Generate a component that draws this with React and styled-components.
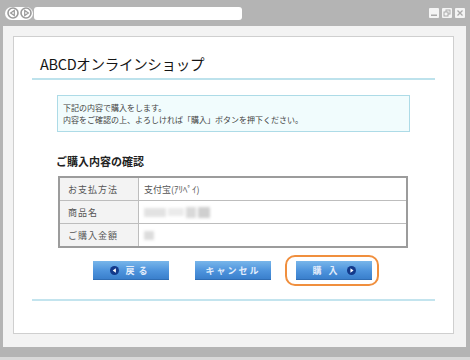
import styled, { createGlobalStyle } from "styled-components"

const Global = createGlobalStyle`
  html, body { margin: 0; padding: 0; background: #d9d9d9; }
  body { font-family: "Noto Sans CJK JP", "Noto Sans", sans-serif; }
`

const Frame = styled.div`
  width: 470px;
  height: 357px;
  background: #b4b4b4;
  display: flex;
  flex-direction: column;
`

const TitleBar = styled.div`
  height: 26px;
  display: flex;
  align-items: center;
  padding: 0 5px;
  box-sizing: border-box;
`

const NavPill = styled.div`
  width: 28px;
  height: 13px;
  background: #fff;
  border-radius: 7px;
  display: flex;
  align-items: center;
  justify-content: center;
  gap: 1px;
`

const Address = styled.div`
  width: 208px;
  height: 13px;
  margin-left: 1px;
  background: #fff;
  border-radius: 3px;
`

const WinButtons = styled.div`
  margin-left: auto;
  display: flex;
  gap: 3px;
`

const WinBtn = styled.div`
  width: 10px;
  height: 10px;
  background: #f4f4f4;
  border-radius: 1px;
  display: flex;
  align-items: center;
  justify-content: center;
`

const WindowBody = styled.div`
  margin: 0 4px 0 3px;
  height: 321px;
  background: #f3f3f3;
  padding: 10px 12px 13px 10px;
  box-sizing: border-box;
`

const Panel = styled.div`
  height: 100%;
  background: #fff;
  border: 1px solid #cfcfcf;
  box-sizing: border-box;
  padding: 0 18px;
`

const Header = styled.h1`
  margin: 0;
  padding: 17px 0 4px 8px;
  font-size: 14.5px;
  line-height: 20px;
  font-weight: 400;
  color: #151515;
  letter-spacing: -0.3px;
  border-bottom: 2px solid #bde2ec;
`

const Notice = styled.div`
  margin: 15px 25px 0 25px;
  padding: 6px 5px 5px;
  background: #f1fcfd;
  border: 1px solid #addbe7;
  font-size: 8px;
  line-height: 12px;
  color: #444;
`

const Section = styled.div`
  margin: 0 26px 0 26px;
`

const SectionTitle = styled.h2`
  margin: 22px 0 8px -2px;
  font-size: 11px;
  line-height: 14px;
  font-weight: 700;
  color: #222;
`

const Table = styled.table`
  width: 350px;
  border-collapse: collapse;
  border: 2px solid #9c9c9c;
  font-size: 9px;
  color: #555;
`

const Th = styled.th`
  width: 70px;
  height: 22px;
  padding: 0 0 0 8px;
  text-align: left;
  font-weight: 400;
  letter-spacing: 1px;
  background: #f3f3f3;
  border: 1px solid #bdbdbd;
`

const Td = styled.td`
  padding: 0 0 0 5px;
  border: 1px solid #bdbdbd;
`

const Blur = styled.div`
  display: flex;
  align-items: center;
  gap: 2px;
  filter: blur(1.6px);
`

const Patch = styled.span`
  display: block;
  width: ${p => p.w}px;
  height: ${p => p.h}px;
  background: ${p => p.c};
`

const Buttons = styled.div`
  display: flex;
  align-items: center;
  margin: 6px 0 0 61px;
  height: 33px;
`

const Button = styled.div`
  width: 76px;
  height: 19px;
  display: flex;
  align-items: center;
  justify-content: center;
  gap: ${p => p.iconGap || 6}px;
  background: linear-gradient(#78b6ea, #4d93dc 55%, #3a7fcc);
  border-bottom: 1px solid #2f6db4;
  box-sizing: border-box;
  color: #e3edfb;
  font-size: 9px;
  font-weight: 700;
  letter-spacing: ${p => p.spacing || 1}px;
  margin-left: ${p => p.gap || 0}px;
`

const Highlight = styled.div`
  margin-left: 14px;
  padding: 4px 5px 4px 9px;
  border: 2.5px solid #f08f3e;
  border-radius: 10px;
`

const Footer = styled.div`
  margin-top: 12px;
  border-top: 2px solid #c3e4ee;
`

const Arrow = ({ dir }) => (
  <svg width="9" height="9" viewBox="0 0 10 10">
    <circle cx="5" cy="5" r="5" fill="#13398a" />
    {dir === "left"
      ? <polygon points="6.5,2.5 6.5,7.5 3,5" fill="#fff" />
      : <polygon points="3.8,2.5 3.8,7.5 7.3,5" fill="#fff" />}
  </svg>
)

const NavCircle = ({ dir }) => (
  <svg width="12" height="12" viewBox="0 0 12 12">
    <circle cx="6" cy="6" r="5" fill="#fff" stroke="#9a9a9a" strokeWidth="1.6" />
    {dir === "left"
      ? <polygon points="7.3,3.5 7.3,8.5 3.6,6" fill="none" stroke="#9a9a9a" strokeWidth="1.2" />
      : <polygon points="4.7,3.5 4.7,8.5 8.4,6" fill="none" stroke="#9a9a9a" strokeWidth="1.2" />}
  </svg>
)

export default function App() {
  return (
    <>
      <Global />
      <Frame>
        <TitleBar>
          <NavPill>
            <NavCircle dir="left" />
            <NavCircle dir="right" />
          </NavPill>
          <Address />
          <WinButtons>
            <WinBtn>
              <svg width="8" height="8" viewBox="0 0 8 8"><rect x="1" y="5.5" width="6" height="1.5" fill="#aaa" /></svg>
            </WinBtn>
            <WinBtn>
              <svg width="8" height="8" viewBox="0 0 8 8">
                <rect x="3" y="1" width="4" height="4" fill="none" stroke="#aaa" strokeWidth="1" />
                <rect x="1" y="3" width="4" height="4" fill="#f4f4f4" stroke="#aaa" strokeWidth="1" />
              </svg>
            </WinBtn>
            <WinBtn>
              <svg width="8" height="8" viewBox="0 0 8 8"><path d="M1.5 1.5 L6.5 6.5 M6.5 1.5 L1.5 6.5" stroke="#aaa" strokeWidth="1.3" /></svg>
            </WinBtn>
          </WinButtons>
        </TitleBar>
        <WindowBody>
          <Panel>
            <Header>ABCDオンラインショップ</Header>
            <Notice>
              下記の内容で購入をします。<br />
              内容をご確認の上、よろしければ「購入」ボタンを押下ください。
            </Notice>
            <Section>
              <SectionTitle>ご購入内容の確認</SectionTitle>
              <Table>
                <tbody>
                  <tr>
                    <Th>お支払方法</Th>
                    <Td>支付宝(ｱﾘﾍﾟｲ)</Td>
                  </tr>
                  <tr>
                    <Th>商品名</Th>
                    <Td>
                      <Blur>
                        <Patch w={22} h={9} c="#e2e2e2" />
                        <Patch w={16} h={8} c="#ebebeb" />
                        <Patch w={10} h={11} c="#d9d9d9" />
                        <Patch w={12} h={11} c="#cfcfcf" />
                      </Blur>
                    </Td>
                  </tr>
                  <tr>
                    <Th>ご購入金額</Th>
                    <Td>
                      <Blur>
                        <Patch w={10} h={9} c="#dcdcdc" />
                      </Blur>
                    </Td>
                  </tr>
                </tbody>
              </Table>
            </Section>
            <Buttons>
              <Button spacing={4}><Arrow dir="left" />戻る</Button>
              <Button gap={26} spacing={2}>キャンセル</Button>
              <Highlight>
                <Button spacing={7} iconGap={2}>購入<Arrow dir="right" /></Button>
              </Highlight>
            </Buttons>
            <Footer />
          </Panel>
        </WindowBody>
      </Frame>
    </>
  )
}
